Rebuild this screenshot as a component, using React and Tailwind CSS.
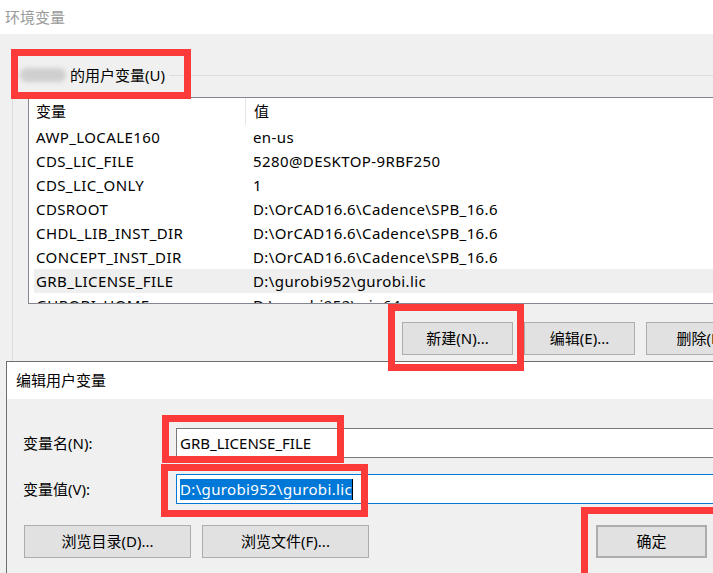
import React from 'react'

const ROWS = [
  ['AWP_LOCALE160', 'en-us'],
  ['CDS_LIC_FILE', '5280@DESKTOP-9RBF250'],
  ['CDS_LIC_ONLY', '1'],
  ['CDSROOT', 'D:\\OrCAD16.6\\Cadence\\SPB_16.6'],
  ['CHDL_LIB_INST_DIR', 'D:\\OrCAD16.6\\Cadence\\SPB_16.6'],
  ['CONCEPT_INST_DIR', 'D:\\OrCAD16.6\\Cadence\\SPB_16.6'],
  ['GRB_LICENSE_FILE', 'D:\\gurobi952\\gurobi.lic', true],
  ['GUROBI_HOME', 'D:\\gurobi952\\win64'],
]

const font = "font-['Noto_Sans','Noto_Sans_CJK_SC',sans-serif]"

function WinButton({ children, className = '' }) {
  return (
    <div className={`h-[33px] flex items-center justify-center bg-[#e1e1e1] border border-[#adadad] text-[15px] text-black ${className}`}>
      {children}
    </div>
  )
}

// red annotation frames drawn over the screenshot
function Mark({ className }) {
  return <div className={`absolute border-[7px] border-[#fc3a3a] pointer-events-none ${className}`} />
}

export default function App() {
  return (
    <div className={`relative w-[713px] h-[573px] overflow-hidden bg-[#f0f0f0] text-black ${font}`}>
      {/* main window title */}
      <div className="h-[34px] bg-white flex items-center pl-[5px] text-[15px] text-[#9a9a9a]">环境变量</div>

      {/* user variables group */}
      <div className="mt-[32px] ml-[12px]">
        <div className="flex items-center h-[18px]">
          <div className="w-[8px] h-px bg-[#dcdcdc]" />
          <div className="w-[46px] h-[14px] rounded-full bg-[#cfcfcf] blur-[2px]" />
          <span className="px-[4px] text-[15px] leading-none">的用户变量(U)</span>
          <div className="flex-1 h-px bg-[#dcdcdc]" />
        </div>
        <div className="border-l border-[#dcdcdc] pl-[15px] pt-[13px]">
          <div className="h-[207px] bg-white border border-[#828790] border-r-0 overflow-hidden text-[15px]">
            <div className="flex h-[27px] items-center">
              <div className="w-[217px] pl-[7px] h-full flex items-center border-r border-[#e5e5e5]">变量</div>
              <div className="pl-[8px]">值</div>
            </div>
            <div className="pl-[5px] tracking-[0.4px]">
              {ROWS.map(([name, value, hl]) => (
                <div key={name} className={`grid grid-cols-[219px_1fr] h-[24px] items-center whitespace-nowrap ${hl ? 'bg-[#efefef]' : ''}`}>
                  <div className="pl-[2px]">{name}</div>
                  <div>{value}</div>
                </div>
              ))}
            </div>
          </div>
          <div className="flex gap-[11px] pl-[374px] mt-[18px] pb-[40px] whitespace-nowrap">
            <WinButton className="w-[111px] shrink-0">新建(N)...</WinButton>
            <WinButton className="w-[111px] shrink-0">编辑(E)...</WinButton>
            <WinButton className="w-[111px] shrink-0">删除(D)</WinButton>
          </div>
        </div>
      </div>

      {/* edit dialog window */}
      <div className="absolute left-[6px] top-[361px] w-[760px] h-[240px] border border-[#6e6e6e] bg-[#f0f0f0]">
        <div className="h-[37px] bg-white flex items-center pl-[9px] text-[15px]">编辑用户变量</div>
        <div className="pl-[16px] pt-[29px] text-[15px]">
          <div className="flex items-center h-[30px]">
            <div className="w-[153px]">变量名(N):</div>
            <div className="w-[560px] h-[30px] bg-white border border-[#7a7a7a] flex items-center pl-[3px]">GRB_LICENSE_FILE</div>
          </div>
          <div className="flex items-center h-[30px] mt-[16px]">
            <div className="w-[153px]">变量值(V):</div>
            <div className="w-[560px] h-[30px] bg-white border border-[#0078d7] flex items-center pl-[3px]">
              <span className="bg-[#0078d7] text-white h-[21px] flex items-center tracking-[0.35px]">D:\gurobi952\gurobi.lic</span>
              <span className="w-px h-[21px] bg-black" />
            </div>
          </div>
          <div className="flex mt-[21px] pl-px whitespace-nowrap">
            <WinButton className="w-[167px]">浏览目录(D)...</WinButton>
            <WinButton className="w-[167px] ml-[11px]">浏览文件(F)...</WinButton>
            <WinButton className="w-[111px] ml-[227px] border-2 border-[#0078d7]">确定</WinButton>
          </div>
        </div>
      </div>

      <Mark className="left-[11px] top-[49px] w-[180px] h-[50px]" />
      <Mark className="left-[388px] top-[304px] w-[136px] h-[67px]" />
      <Mark className="left-[162px] top-[415px] w-[182px] h-[48px]" />
      <Mark className="left-[161px] top-[464px] w-[207px] h-[53px]" />
      <Mark className="left-[581px] top-[507px] w-[140px] h-[80px]" />
    </div>
  )
}
